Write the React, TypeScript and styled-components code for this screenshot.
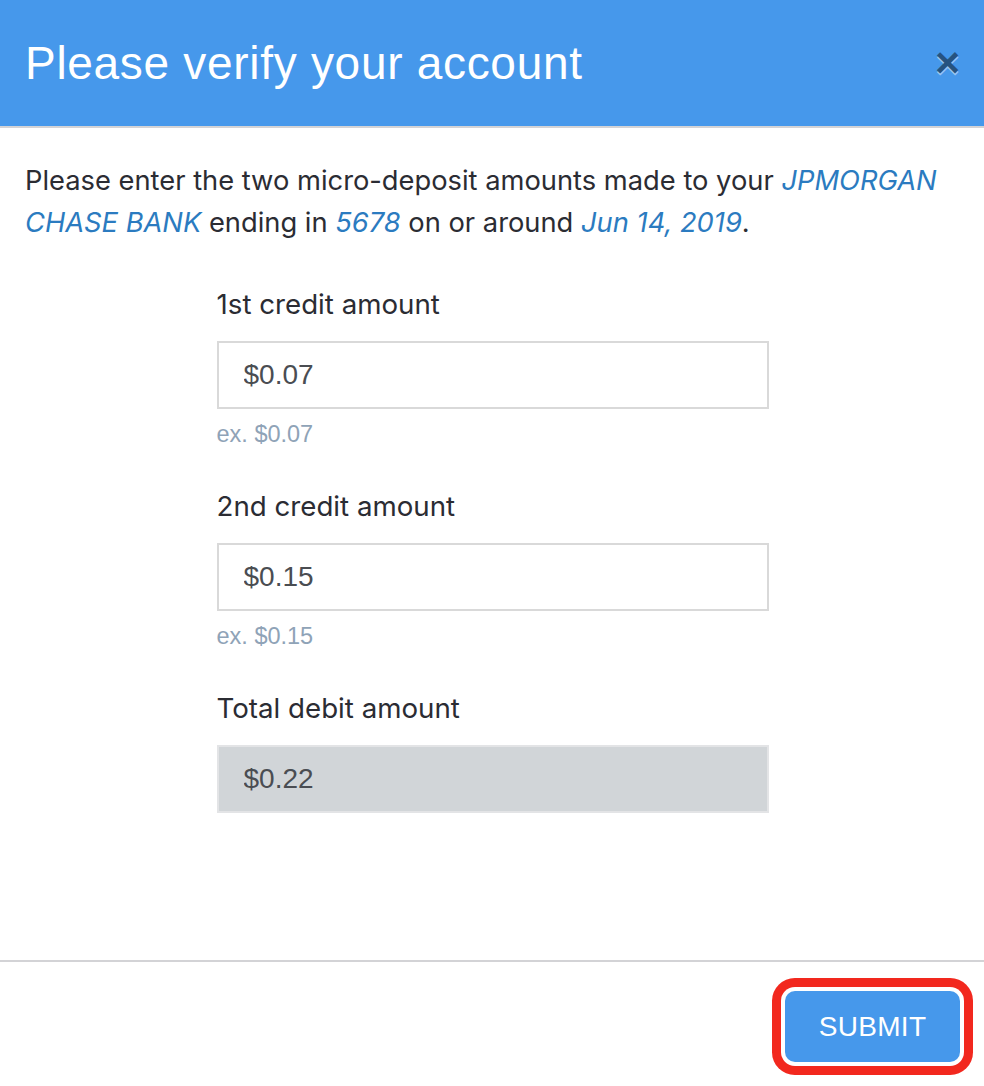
import React from "react";
import styled, { createGlobalStyle } from "styled-components";

const Global = createGlobalStyle`
  html, body { margin: 0; padding: 0; background: #fff; }
  body { font-family: "Liberation Sans", Arial, sans-serif; }
  * { box-sizing: border-box; }
`;

const Modal = styled.div`
  display: flex;
  flex-direction: column;
  min-height: 100vh;
  background: #fff;
`;

const Header = styled.header`
  height: 128px;
  background: #4698eb;
  border-bottom: 2px solid #d3d3d6;
  display: flex;
  align-items: center;
  justify-content: space-between;
  padding: 0 24px 0 25px;
`;

const Title = styled.h1`
  margin: 0;
  font-family: "Liberation Sans", Arial, sans-serif;
  font-weight: 400;
  font-size: 46px;
  letter-spacing: 0.7px;
  color: #fff;
`;

const Close = styled.button`
  border: 0;
  background: none;
  padding: 0;
  margin-top: -2px;
  font-family: "Liberation Sans", Arial, sans-serif;
  font-size: 43px;
  font-weight: 700;
  line-height: 1;
  color: #000;
  opacity: 0.45;
  text-shadow: 0 2px 0 #fff;
  cursor: pointer;
`;

const Body = styled.main`
  flex: 1;
  padding: 32px 24px 0 25px;
`;

const Intro = styled.p`
  margin: 0;
  font-family: Inter, "Liberation Sans", sans-serif;
  font-size: 27.3px;
  line-height: 42px;
  color: #2b2c33;
`;

const Ref = styled.em`
  color: #2b7bc0;
  font-style: italic;
`;

const Form = styled.form`
  width: 552px;
  margin: 42px auto 0;
  display: flex;
  flex-direction: column;
`;

const Field = styled.div`
  display: flex;
  flex-direction: column;
  margin-bottom: 40px;
`;

const Label = styled.label`
  font-family: Inter, "Liberation Sans", sans-serif;
  font-size: 27.7px;
  line-height: 36px;
  color: #2b2c33;
  margin-bottom: 19px;
`;

const Input = styled.input<{ $disabled?: boolean }>`
  height: 68px;
  width: 100%;
  border: 2px solid ${(p) => (p.$disabled ? "#e3e4e6" : "#d9d9d9")};
  background: ${(p) => (p.$disabled ? "#d1d5d8" : "#fff")};
  padding: 0 25px;
  font-family: "Liberation Sans", Arial, sans-serif;
  font-size: 28px;
  color: #4a4d52;
  outline: none;
`;

const Hint = styled.div`
  margin-top: 11px;
  font-family: "Liberation Sans", Arial, sans-serif;
  font-size: 23.5px;
  line-height: 28px;
  color: #8fa3b7;
`;

const Footer = styled.footer`
  border-top: 2px solid #d3d3d6;
  padding: 29px 24px 24px;
  display: flex;
  justify-content: flex-end;
`;

const Submit = styled.button`
  width: 175px;
  height: 71px;
  border: 0;
  border-radius: 10px;
  background: #4698eb;
  color: #fff;
  font-family: "Liberation Sans", Arial, sans-serif;
  font-size: 28px;
  letter-spacing: 0.3px;
  box-shadow: 0 0 0 4px #fff, 0 0 0 13px #f2281e;
  cursor: pointer;
`;

const fields = [
  { label: "1st credit amount", value: "$0.07", hint: "ex. $0.07" },
  { label: "2nd credit amount", value: "$0.15", hint: "ex. $0.15" },
];

export default function App() {
  return (
    <Modal>
      <Global />
      <Header>
        <Title>Please verify your account</Title>
        <Close aria-label="Close">×</Close>
      </Header>
      <Body>
        <Intro>
          Please enter the two micro-deposit amounts made to your{" "}
          <Ref>JPMORGAN CHASE BANK</Ref> ending in <Ref>5678</Ref> on or around{" "}
          <Ref>Jun 14, 2019</Ref>.
        </Intro>
        <Form onSubmit={(e) => e.preventDefault()}>
          {fields.map((f) => (
            <Field key={f.label}>
              <Label>{f.label}</Label>
              <Input defaultValue={f.value} />
              <Hint>{f.hint}</Hint>
            </Field>
          ))}
          <Field>
            <Label>Total debit amount</Label>
            <Input $disabled readOnly value="$0.22" />
          </Field>
        </Form>
      </Body>
      <Footer>
        <Submit type="button">SUBMIT</Submit>
      </Footer>
    </Modal>
  );
}
